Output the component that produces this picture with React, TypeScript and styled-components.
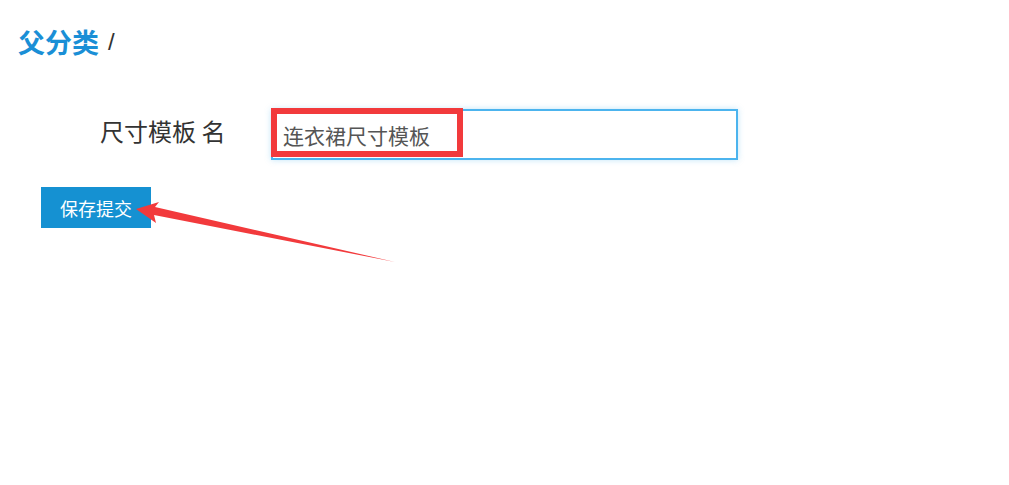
import styled, { createGlobalStyle } from 'styled-components';

const GlobalStyle = createGlobalStyle`
  body {
    margin: 0;
    background: #ffffff;
    font-family: "Noto Sans CJK SC", "Noto Sans", sans-serif;
  }
`;

const Page = styled.div`
  position: relative;
  width: 1009px;
  height: 485px;
  box-sizing: border-box;
  padding: 21px 0 0 18px;
`;

const Breadcrumb = styled.div`
  display: flex;
  align-items: center;
  gap: 9px;
  height: 41px;
`;

const Crumb = styled.a`
  font-size: 27px;
  font-weight: 700;
  color: #1a8fd6;
  text-decoration: none;
`;

const Slash = styled.span`
  font-family: "Liberation Sans", sans-serif;
  font-size: 24px;
  color: #333;
`;

const Form = styled.form`
  display: flex;
  flex-direction: column;
  gap: 27px;
  padding-top: 47px;
`;

const Row = styled.div`
  display: flex;
  align-items: flex-start;
`;

const Label = styled.label`
  width: 171px;
  padding: 2px 0 0 82px;
  font-size: 24px;
  line-height: 40px;
  color: #333;
`;

const InputWrap = styled.div`
  position: relative;
`;

const Input = styled.input`
  width: 467px;
  height: 51px;
  box-sizing: border-box;
  border: 2px solid #4cb4ee;
  box-shadow: 0 0 6px rgba(76, 180, 238, 0.35);
  outline: none;
  padding: 1px 0 0 10px;
  font-family: "Noto Sans CJK SC", sans-serif;
  font-size: 21px;
  color: #555;
`;

const Highlight = styled.div`
  position: absolute;
  left: 0;
  top: -1px;
  width: 192px;
  height: 49px;
  box-sizing: border-box;
  border: 6px solid #f23a3c;
  pointer-events: none;
`;

const SubmitButton = styled.button`
  align-self: flex-start;
  margin-left: 23px;
  width: 110px;
  height: 41px;
  border: none;
  background: #1591d2;
  color: #ffffff;
  font-family: "Noto Sans CJK SC", sans-serif;
  font-size: 18px;
  padding: 0;
`;

const ArrowLayer = styled.svg`
  position: absolute;
  left: 0;
  top: 0;
  pointer-events: none;
`;

export default function App() {
  return (
    <>
      <GlobalStyle />
      <Page>
        <Breadcrumb>
          <Crumb href="#">父分类</Crumb>
          <Slash>/</Slash>
        </Breadcrumb>
        <Form onSubmit={(e) => e.preventDefault()}>
          <Row>
            <Label>尺寸模板 名</Label>
            <InputWrap>
              <Input defaultValue="连衣裙尺寸模板" />
              <Highlight />
            </InputWrap>
          </Row>
          <SubmitButton type="submit">保存提交</SubmitButton>
        </Form>
        <ArrowLayer width="1009" height="485" viewBox="0 0 1009 485">
          <polygon
            points="136,209 159,202 155,207 395,262 154,215 156,223"
            fill="#f23a3c"
          />
        </ArrowLayer>
      </Page>
    </>
  );
}
